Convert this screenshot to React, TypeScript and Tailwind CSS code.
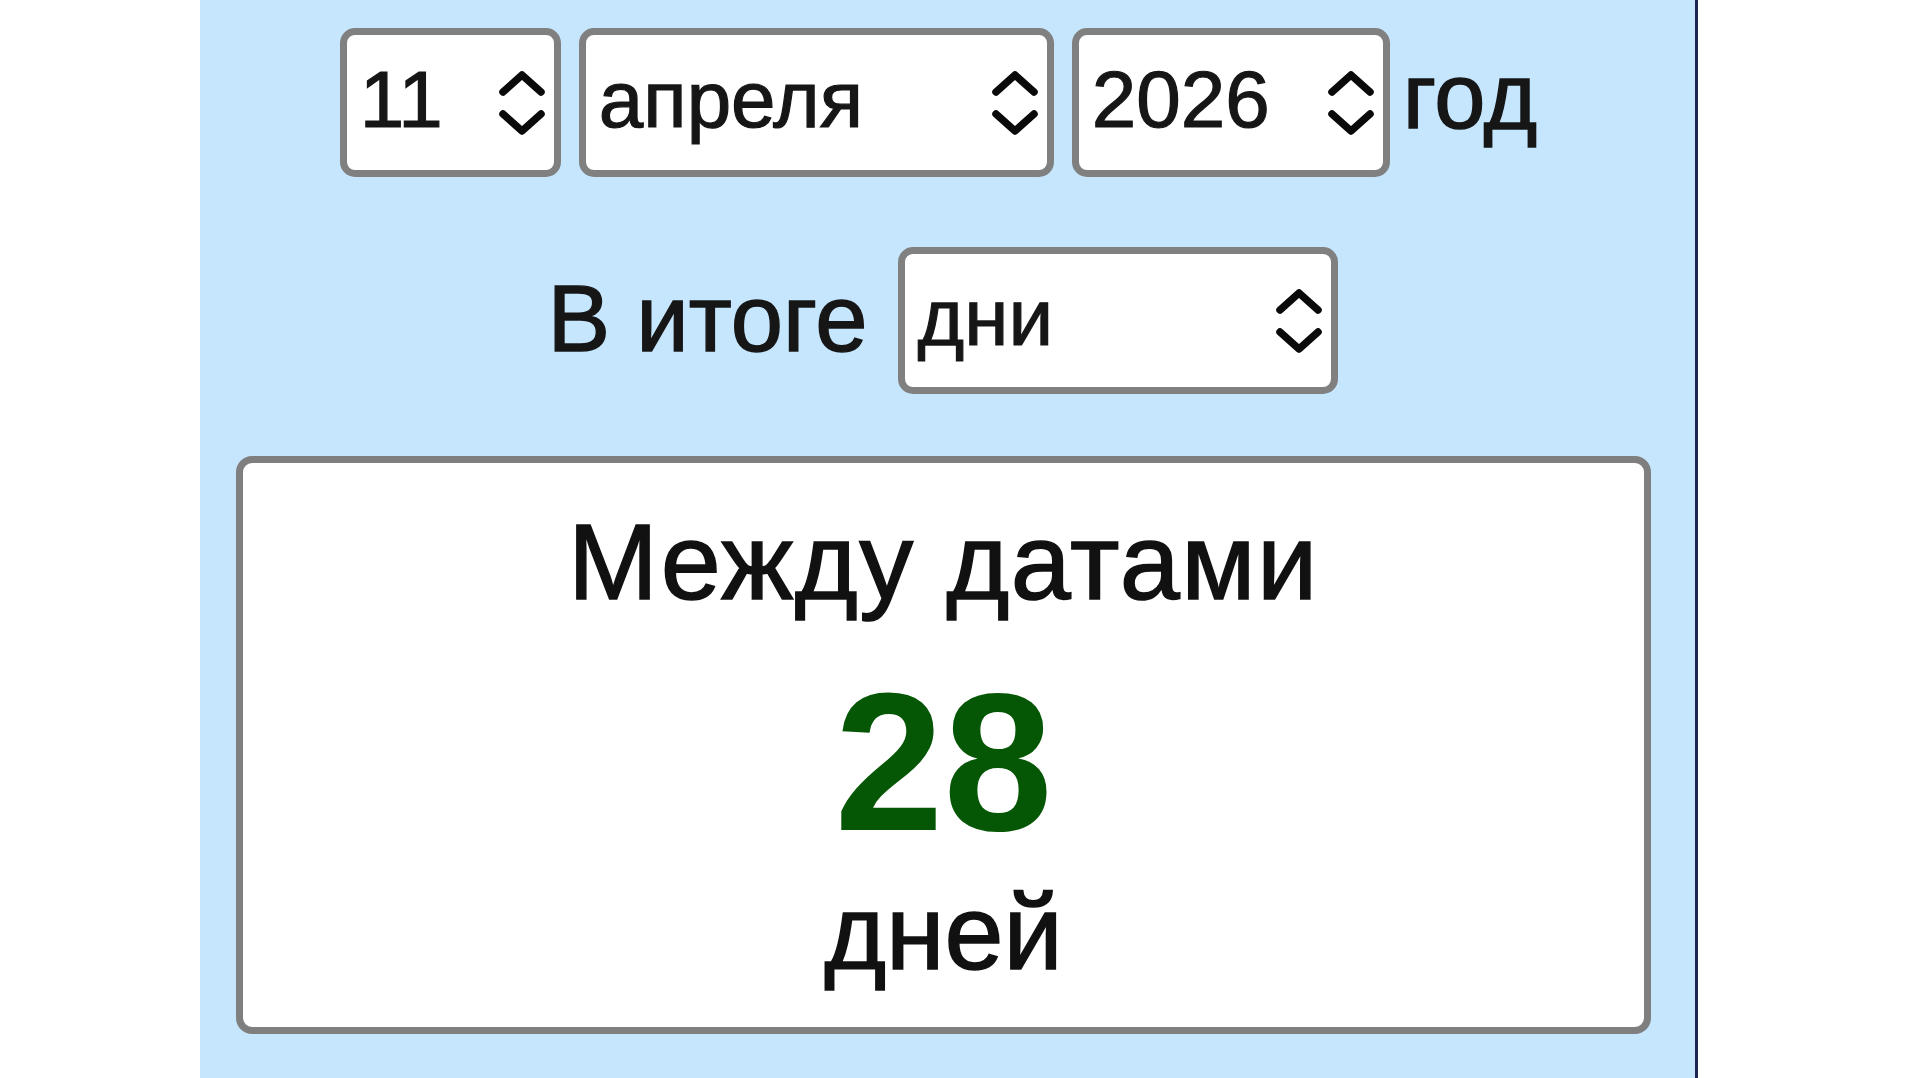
import React from "react";

const Chevrons = () => (
  <svg
    width="46"
    height="64"
    viewBox="0 0 46 64"
    fill="none"
    stroke="#0a0a0a"
    strokeWidth="7.5"
    strokeLinecap="round"
    strokeLinejoin="round"
    className="shrink-0"
  >
    <path d="M4 21 L23 4 L42 21" />
    <path d="M4 43 L23 60 L42 43" />
  </svg>
);

type SelProps = { value: string; w: string; h: string };

const FakeSelect = ({ value, w, h }: SelProps) => (
  <div
    className={`${w} ${h} shrink-0 border-[7px] border-[#808080] rounded-[15px] bg-white flex items-center justify-between pl-[13px] pr-[9px]`}
  >
    <span className="text-[80px] leading-none pb-[6px] text-[#161616] [-webkit-text-stroke:1.2px_#161616]">
      {value}
    </span>
    <Chevrons />
  </div>
);

export default function App() {
  return (
    <div className="w-full h-[1078px] bg-white flex overflow-hidden font-['Liberation_Sans',Arial,sans-serif] text-[#161616]">
      <div className="w-[200px] shrink-0" />
      <div className="w-[1498px] shrink-0 h-full bg-[#c5e6fd] border-r-[3px] border-[#1c2452] flex flex-col items-center pt-[28px]">
        {/* Row 1 */}
        <div className="w-full flex items-center justify-center pr-[18px]">
          <FakeSelect value="11" w="w-[221px]" h="h-[149px]" />
          <div className="ml-[18px]">
            <FakeSelect value="апреля" w="w-[475px]" h="h-[149px]" />
          </div>
          <div className="ml-[18px]">
            <FakeSelect value="2026" w="w-[318px]" h="h-[149px]" />
          </div>
          <span className="ml-[13px] text-[92px] leading-none pb-[14px] [-webkit-text-stroke:1.4px_#161616]">
            год
          </span>
        </div>

        {/* Row 2 */}
        <div className="w-full flex items-center justify-center pr-[10px] mt-[70px]">
          <span className="text-[94px] leading-none pb-[4px] mr-[30px] [-webkit-text-stroke:1.4px_#161616]">
            В итоге
          </span>
          <FakeSelect value="дни" w="w-[440px]" h="h-[147px]" />
        </div>

        {/* Result card */}
        <div className="mt-[62px] w-[1415px] ml-[-8px] border-[7px] border-[#7f7f7f] rounded-[16px] bg-white flex flex-col items-center pt-[45px] pb-[42px]">
          <div className="text-[108px] leading-none tracking-[1.5px] text-[#111] [-webkit-text-stroke:1.5px_#111]">
            Между датами
          </div>
          <div className="mt-[49px] text-[196px] leading-none font-bold text-[#055605]">28</div>
          <div className="mt-[18px] text-[106px] leading-none text-[#111] [-webkit-text-stroke:1.5px_#111]">
            дней
          </div>
        </div>
      </div>
      <div className="flex-1 bg-white" />
    </div>
  );
}
